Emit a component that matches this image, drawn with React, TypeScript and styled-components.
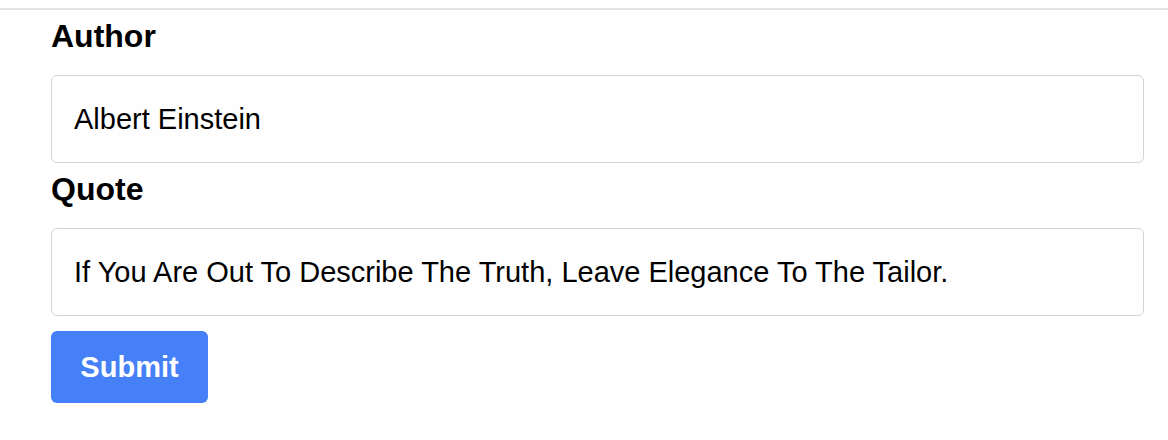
import React from "react";
import styled, { createGlobalStyle } from "styled-components";

const Global = createGlobalStyle`
  html, body { margin: 0; padding: 0; background: #ffffff; }
  body { padding-top: 8px; font-family: "Liberation Sans", Arial, sans-serif; color: #000; }
`;

const Page = styled.div`
  border-top: 2px solid #e3e3e3;
  padding: 0 24px 0 51px;
`;

const Form = styled.form`
  display: flex;
  flex-direction: column;
  align-items: stretch;
`;

const Label = styled.label`
  display: block;
  font-size: 32px;
  font-weight: 700;
  line-height: 36px;
  margin: 8px 0 21px;
`;

const Input = styled.input`
  box-sizing: border-box;
  width: 100%;
  height: 88px;
  padding: 0 22px;
  border: 1px solid #d3d3db;
  border-radius: 6px;
  background: #fefefe;
  font-family: "Liberation Sans", Arial, sans-serif;
  font-size: 29px;
  color: #000;
  outline: none;
`;

const Button = styled.button`
  align-self: flex-start;
  margin-top: 15px;
  width: 157px;
  height: 72px;
  border: none;
  border-radius: 6px;
  background: #4580f8;
  color: #fff;
  font-family: "Liberation Sans", Arial, sans-serif;
  font-size: 29px;
  font-weight: 700;
  cursor: pointer;
`;

export default function App() {
  return (
    <>
      <Global />
      <Page>
        <Form onSubmit={(e) => e.preventDefault()}>
          <Label htmlFor="author">Author</Label>
          <Input id="author" defaultValue="Albert Einstein" />
          <Label htmlFor="quote">Quote</Label>
          <Input
            id="quote"
            defaultValue="If You Are Out To Describe The Truth, Leave Elegance To The Tailor."
          />
          <Button type="submit">Submit</Button>
        </Form>
      </Page>
    </>
  );
}
